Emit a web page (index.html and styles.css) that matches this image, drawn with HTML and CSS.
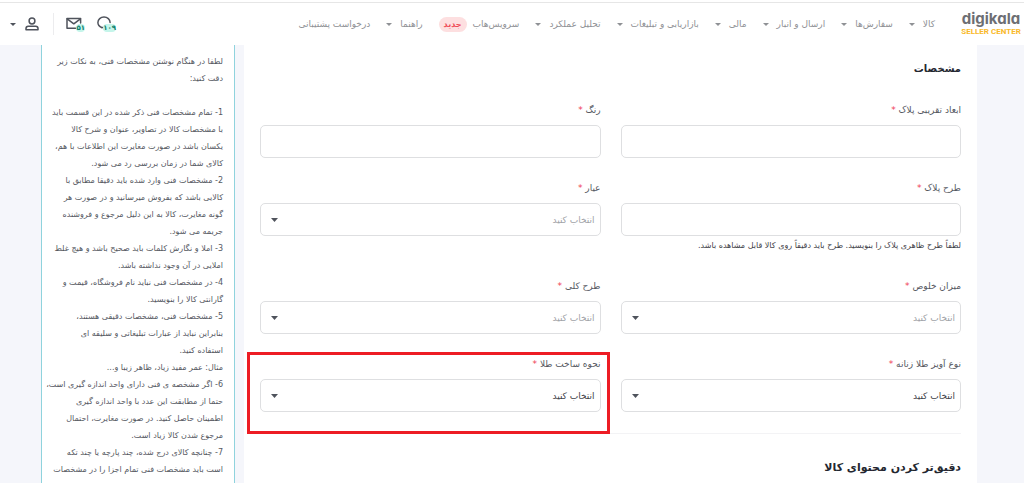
FILE: index.html
```html
<!DOCTYPE html>
<html lang="fa" dir="rtl">
<head>
    <meta charset="UTF-8">
    <meta name="viewport" content="width=device-width, initial-scale=1.0">
    <title>Digikala Seller Center</title>
    <link rel="stylesheet" href="styles.css">
</head>
<body>
    <header class="header">
        <a class="logo" href="#" dir="ltr">
            <span class="logo-name">digikala</span>
            <span class="logo-sub">SELLER CENTER</span>
        </a>
        <nav class="nav">
            <a class="has-menu" href="#">کالا</a>
            <a class="has-menu" href="#">سفارش‌ها</a>
            <a class="has-menu" href="#">ارسال و انبار</a>
            <a class="has-menu" href="#">مالی</a>
            <a class="has-menu" href="#">بازاریابی و تبلیغات</a>
            <a class="has-menu" href="#">تحلیل عملکرد</a>
            <a class="has-badge" href="#">سرویس‌هاب <span class="new-badge">جدید</span></a>
            <a class="has-menu" href="#">راهنما</a>
            <a href="#">درخواست پشتیبانی</a>
        </nav>
        <div class="tools">
            <button class="tool" type="button" aria-label="پیام‌ها">
                <svg width="19" height="16" viewBox="0 0 19 16" fill="none" stroke="#4f535c" stroke-width="1.5" stroke-linecap="round">
                    <path d="M4.8 11.6C2.2 10.6 .9 8.8 .9 6.6.9 3.4 3.6 1 7 1s6.1 2.4 6.1 5.6"/>
                    <path d="M4.5 11.6h3M7.4 11.4v2.2"/>
                </svg>
                <span class="count">۱۰۹</span>
            </button>
            <button class="tool" type="button" aria-label="نامه‌ها">
                <svg width="19" height="16" viewBox="0 0 19 16" fill="none" stroke="#4f535c" stroke-width="1.5" stroke-linejoin="round" stroke-linecap="round">
                    <path d="M9.5 12.2H1V2.4h13.6V7"/>
                    <path d="M1.2 2.8l6.6 5 6.6-5"/>
                </svg>
                <span class="count">۵۱</span>
            </button>
            <button class="tool user" type="button" aria-label="حساب کاربری">
                <svg width="14" height="14" viewBox="0 0 14 14" fill="none" stroke="#4f535c" stroke-width="1.5" stroke-linejoin="round">
                    <circle cx="7" cy="4" r="2.9"/>
                    <path d="M1 12.8v-1.2c0-1.3 1-2.3 2.3-2.3h7.4c1.3 0 2.3 1 2.3 2.3v1.2z"/>
                </svg>
            </button>
        </div>
    </header>

    <main class="page">
        <form class="form">
            <h3>مشخصات</h3>
            <div class="grid">
                <div class="field">
                    <label for="size">ابعاد تقریبی پلاک <span class="req">*</span></label>
                    <input type="text" id="size">
                </div>
                <div class="field">
                    <label for="color">رنگ <span class="req">*</span></label>
                    <input type="text" id="color">
                </div>
                <div class="field">
                    <label for="design">طرح پلاک <span class="req">*</span></label>
                    <input type="text" id="design">
                    <p class="hint">لطفاً طرح ظاهری پلاک را بنویسید. طرح باید دقیقاً روی کالا قابل مشاهده باشد.</p>
                </div>
                <div class="field">
                    <label for="karat">عیار <span class="req">*</span></label>
                    <select id="karat" class="empty"><option>انتخاب کنید</option></select>
                </div>
                <div class="field">
                    <label for="purity">میزان خلوص <span class="req">*</span></label>
                    <select id="purity" class="empty"><option>انتخاب کنید</option></select>
                </div>
                <div class="field">
                    <label for="pattern">طرح کلی <span class="req">*</span></label>
                    <select id="pattern" class="empty"><option>انتخاب کنید</option></select>
                </div>
                <div class="field">
                    <label for="pendant">نوع آویز طلا زنانه <span class="req">*</span></label>
                    <select id="pendant"><option>انتخاب کنید</option></select>
                </div>
                <div class="field marked">
                    <label for="making">نحوه ساخت طلا <span class="req">*</span></label>
                    <select id="making"><option>انتخاب کنید</option></select>
                </div>
            </div>
            <hr>
            <h2>دقیق‌تر کردن محتوای کالا</h2>
        </form>

        <aside class="tips">
            <p>لطفا در هنگام نوشتن مشخصات فنی، به نکات زیر<br>دقت کنید:</p>
            <ul>
                <li>1- تمام مشخصات فنی ذکر شده در این قسمت باید<br>با مشخصات کالا در تصاویر، عنوان و شرح کالا<br>یکسان باشد در صورت مغایرت این اطلاعات با هم،<br>کالای شما در زمان بررسی رد می شود.</li>
                <li>2- مشخصات فنی وارد شده باید دقیقا مطابق با<br>کالایی باشد که بفروش میرسانید و در صورت هر<br>گونه مغایرت، کالا به این دلیل مرجوع و فروشنده<br>جریمه می شود.</li>
                <li>3- املا و نگارش کلمات باید صحیح باشد و هیچ غلط<br>املایی در آن وجود نداشته باشد.</li>
                <li>4- در مشخصات فنی نباید نام فروشگاه، قیمت و<br>گارانتی کالا را بنویسید.</li>
                <li>5- مشخصات فنی، مشخصات دقیقی هستند،<br>بنابراین نباید از عبارات تبلیغاتی و سلیقه ای<br>استفاده کنید.<br>مثال: عمر مفید زیاد، ظاهر زیبا و...</li>
                <li>6- اگر مشخصه ی فنی دارای واحد اندازه گیری است،<br>حتما از مطابقت این عدد با واحد اندازه گیری<br>اطمینان حاصل کنید. در صورت مغایرت، احتمال<br>مرجوع شدن کالا زیاد است.</li>
                <li>7- چنانچه کالای درج شده، چند پارچه یا چند تکه<br>است باید مشخصات فنی تمام اجزا را در مشخصات</li>
            </ul>
        </aside>
    </main>
</body>
</html>
```
FILE: styles.css
```css
:root {
    --bg: #f5f6fb;
    --text: #55585f;
    --dark: #23262f;
    --muted: #a1a3a8;
    --line: #dedfe1;
    --red: #ed1c24;
}
* {
    box-sizing: border-box;
}
body {
    margin: 0;
    min-height: 100vh;
    display: flex;
    flex-direction: column;
    background: var(--bg);
    color: var(--text);
    font-family: "DejaVu Sans", sans-serif;
    font-size: 9px;
}
a {
    color: inherit;
    text-decoration: none;
}
.header {
    display: flex;
    align-items: center;
    height: 45px;
    padding: 3px 5px 0 10px;
    background: linear-gradient(#e6e6e6, #e6e6e6) 0 2px / 100% 1px no-repeat #fff;
}
.logo {
    display: flex;
    flex-direction: column;
    align-items: center;
    width: 56px;
}
.logo-name {
    font-family: Inter, sans-serif;
    font-size: 15px;
    font-weight: 700;
    line-height: 15px;
    color: #6d6e73;
    font-feature-settings: "cv11";
}
.logo-sub {
    font-family: Roboto, sans-serif;
    font-size: 8px;
    font-weight: 700;
    line-height: 12px;
    color: #f9b92b;
    white-space: nowrap;
}
.nav {
    display: flex;
    align-items: center;
    gap: 16px;
    margin-right: 28px;
    color: #8f9195;
    white-space: nowrap;
}
.nav a {
    display: flex;
    align-items: center;
    gap: 6px;
}
.nav .has-menu {
    gap: 8px;
}
.has-menu::after,
.user::after {
    content: "";
    border: 3px solid transparent;
    border-top-color: currentColor;
    border-bottom: 0;
}
.new-badge {
    padding: 0 5px;
    border-radius: 8px;
    background: #fddfe0;
    color: #ef4b57;
    font-size: 8px;
    font-weight: bold;
    line-height: 15px;
}
.tools {
    display: flex;
    align-items: center;
    gap: 12px;
    margin-right: auto;
}
.tool {
    position: relative;
    display: flex;
    align-items: center;
    padding: 0;
    border: 0;
    background: none;
    color: #4f535c;
    font-family: inherit;
}
.count {
    position: absolute;
    right: 0;
    bottom: 0;
    border-radius: 4px;
    background: #c5f5ea;
    color: #0d7f6d;
    font-size: 7px;
    font-weight: bold;
    line-height: 8px;
}
.user {
    gap: 9px;
    height: 22px;
    padding-right: 14px;
    border-right: 1px solid #ececee;
}
.page {
    flex: 1;
    display: flex;
    gap: 9px;
    padding: 0 47px 0 41px;
}
.form {
    flex: 1;
    min-width: 0;
    padding: 14px 16px 0;
    background: #fff;
}
h2, h3 {
    margin: 0;
    color: var(--dark);
}
h3 {
    margin-bottom: 21px;
    font-size: 10px;
    line-height: 20px;
}
h2 {
    font-size: 11px;
    line-height: 28px;
}
.grid {
    display: grid;
    grid-template-columns: 1fr 1fr;
    gap: 20px;
}
.field {
    position: relative;
}
.field label {
    display: block;
    margin-bottom: 5px;
    line-height: 20px;
}
.req {
    color: #ef4056;
}
.field input,
.field select {
    display: block;
    width: 100%;
    height: 33px;
    padding: 0 5px;
    border: 1px solid var(--line);
    border-radius: 5px;
    background-color: #fff;
    color: #3f4249;
    font-family: inherit;
    font-size: 9px;
}
.field select {
    appearance: none;
    background-image: url("data:image/svg+xml,%3Csvg xmlns='http://www.w3.org/2000/svg' width='7' height='4'%3E%3Cpath d='M0 0h7L3.5 4z' fill='%234f535c'/%3E%3C/svg%3E");
    background-repeat: no-repeat;
    background-position: 10px center;
}
.field .empty {
    color: var(--muted);
}
.hint {
    margin: 0;
    color: #3f4249;
    font-size: 8px;
    line-height: 20px;
    white-space: nowrap;
}
.marked::after {
    content: "";
    position: absolute;
    inset: -2px -9px -22px -13px;
    border: 3px solid var(--red);
    pointer-events: none;
}
hr {
    height: 1px;
    margin: 21px 0 20px;
    border: 0;
    background: #f3f3f5;
}
.tips {
    width: 194px;
    padding: 8px 11px 0;
    border: 1px solid #8fd3dd;
    border-width: 0 1px;
    background: #fff;
    font-size: 8px;
    line-height: 17px;
    white-space: nowrap;
}
.tips p {
    margin: 0 0 17px;
}
.tips ul {
    margin: 0;
    padding: 0;
    list-style: none;
}
```
